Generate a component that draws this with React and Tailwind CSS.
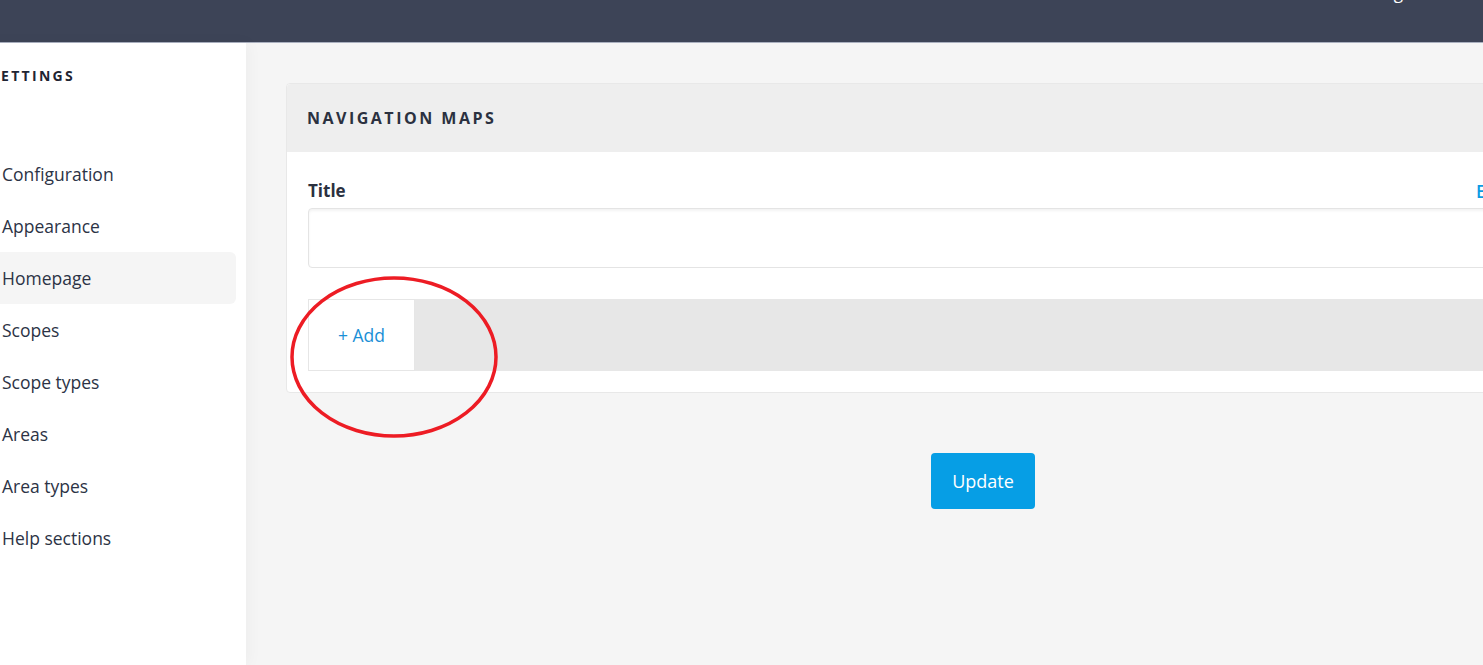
import React from "react";

const menu = [
  "Configuration",
  "Appearance",
  "Homepage",
  "Scopes",
  "Scope types",
  "Areas",
  "Area types",
  "Help sections",
];

export default function App() {
  return (
    <div
      className="relative w-[1483px] h-[665px] overflow-hidden bg-[#f5f5f5] text-[#2c3345]"
      style={{ fontFamily: '"Open Sans", "Liberation Sans", sans-serif' }}
    >
      {/* top bar */}
      <div className="relative h-[43px] bg-[#3d4457] border-b border-[#aab0bf]">
        <span className="absolute right-[72px] top-[-20px] text-[17px] text-white">Settings</span>
      </div>

      <div className="flex -ml-[20px] w-[1740px] h-[622px]">
        {/* sidebar */}
        <aside className="w-[266px] shrink-0 bg-white pr-[10px] pl-[10px] shadow-[3px_0_14px_rgba(0,0,0,0.035)] z-10">
          <h1 className="pt-[22px] pl-[1px] text-[14px] font-bold tracking-[2.3px] text-[#1f2533]">SETTINGS</h1>
          <nav className="mt-[62px] flex flex-col">
            {menu.map((item) => (
              <a
                key={item}
                className={`h-[52px] flex items-center pl-[12px] text-[17.5px] rounded-[6px] ${
                  item === "Homepage" ? "bg-[#f5f5f5]" : ""
                }`}
              >
                {item}
              </a>
            ))}
          </nav>
        </aside>

        {/* main */}
        <main className="flex-1 px-[40px] pt-[40px]">
          <section className="bg-white border border-[#e8e8e8] rounded-[4px]">
            <div className="h-[68px] bg-[#eeeeee] flex items-center px-[20px] rounded-t-[4px]">
              <h2 className="text-[16px] font-bold tracking-[2.5px] text-[#2b3140]">NAVIGATION MAPS</h2>
            </div>
            <div className="px-[21px] pt-[26px] pb-[21px]">
              <div className="flex justify-between items-center">
                <label className="text-[17px] font-bold text-[#2b3140]">Title</label>
                <span className="w-[182px] text-[17.5px] font-semibold text-[#0a9be3]">English</span>
              </div>
              <input
                type="text"
                className="mt-[4px] block w-full h-[60px] border border-[#e4e4e4] rounded-[4px] shadow-[inset_0_2px_3px_rgba(0,0,0,0.05)] outline-none"
              />
              <div className="mt-[31px] h-[72px] bg-[#e7e7e7] flex">
                <button className="w-[107px] h-full bg-white border border-[#e6e6e6] text-[17.5px] text-[#1a8fd6]">
                  + Add
                </button>
              </div>
            </div>
          </section>
          <div className="flex justify-center mt-[60px]">
            <button className="w-[104px] h-[56px] bg-[#069ee5] rounded-[4px] text-white text-[18px]">
              Update
            </button>
          </div>
        </main>
      </div>

      {/* annotation */}
      <svg className="absolute left-0 top-0 pointer-events-none" width="1483" height="665">
        <ellipse cx="394" cy="357" rx="102" ry="79" fill="none" stroke="#ed1c24" strokeWidth="3.5" />
      </svg>
    </div>
  );
}
